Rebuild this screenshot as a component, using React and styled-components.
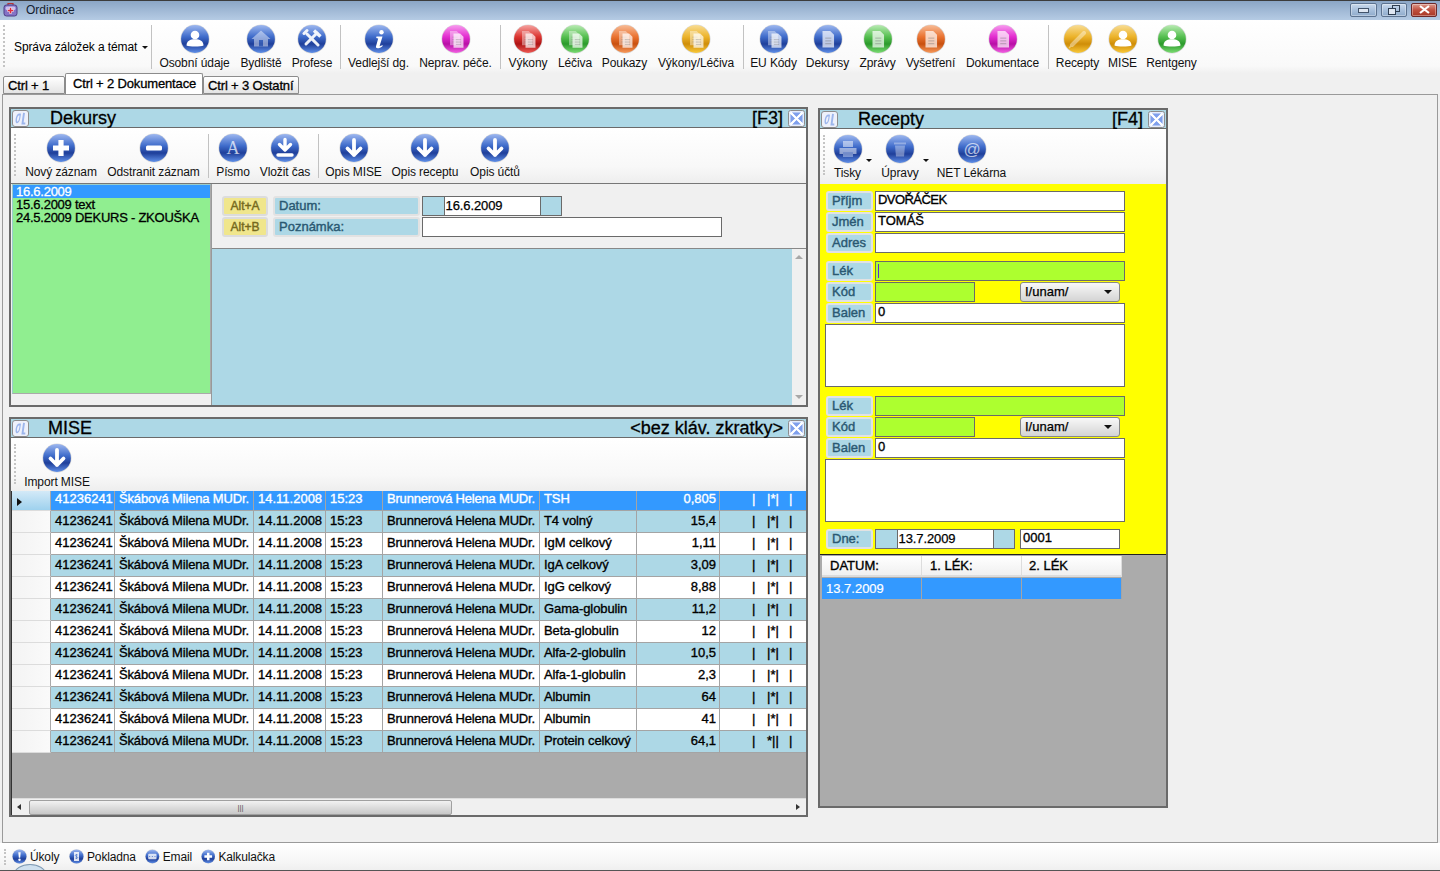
import React from "react";
import styled, { createGlobalStyle } from "styled-components";

const Global = createGlobalStyle`
  html, body { margin: 0; padding: 0; background: #f0f0f0; }
  * { box-sizing: border-box; }
  body { font-family: "Liberation Sans", Arial, sans-serif; font-size: 12px; color: #000; }
`;

const Root = styled.div`
  width: 1440px; height: 871px; overflow: hidden; display: flex; flex-direction: column;
  background: #f0f0f0; position: relative;
`;
const TitleBar = styled.div`
  height: 20px; flex: none; display: flex; align-items: center; padding: 0 3px 2px 3px;
  background: linear-gradient(#8ba6c6, #a3bbd7 55%, #b5cbe4);
  border-top: 1px solid #3c3c3c;
`;
const TitleText = styled.span` margin-left: 8px; font-size: 12px; color: #14202e; flex: 1; `;
const WinBtn = styled.div`
  width: ${p => p.$w}px; height: 14px; margin-left: 4px; border-radius: 2px;
  border: 1px solid ${p => p.$close ? "#6d2a2a" : "#5c7390"};
  background: ${p => p.$close ? "linear-gradient(#dc9a8c, #c0503f 50%, #a83826)" : "linear-gradient(#c9d9ec, #a8c0dc 50%, #8fabcb)"};
  display: flex; align-items: center; justify-content: center; box-shadow: inset 0 0 0 1px rgba(255,255,255,.35);
`;
const TopArea = styled.div`
  height: 74px; flex: none; display: flex; flex-direction: column; position: relative;
  background: linear-gradient(#fff, #f9f9f9 62%, #f0f0f0 72%);
`;
const BigBar = styled.div` height: 53px; flex: none; display: flex; align-items: flex-start; padding-top: 4px; `;
const Grip = styled.div`
  width: 0; flex: none; height: ${p => p.$h || 42}px; border-left: 2px dotted #c4c4c4; margin: ${p => p.$m || "0"};
`;
const Sep = styled.div` flex: none; width: 1px; height: 44px; background: #c2c2c2; margin: 1px 2.5px 0 2.5px; `;
const Menu = styled.div`
  width: 148px; flex: none; height: 44px; display: flex; align-items: center; padding: 2px 0 0 14px; gap: 5px; white-space: nowrap; letter-spacing: -.1px;
  position: relative;
`;
const TopGrip = styled(Grip)` position: absolute; left: 3px; top: 1px; `;
const Caret = styled.span`
  display: inline-block; width: 0; height: 0; border-left: 3px solid transparent; border-right: 3px solid transparent;
  border-top: 3px solid #111;
`;
const Tool = styled.div`
  width: ${p => p.$w}px; flex: none; display: flex; flex-direction: column; align-items: center; position: relative;
  margin-right: ${p => p.$mr || 0}px; white-space: nowrap; font-size: 12px; color: #111; gap: 2px; letter-spacing: -.1px;
  svg { display: block; }
`;
const DropMark = styled.span`
  position: absolute; right: -5px; top: 25px; width: 0; height: 0;
  border-left: 3px solid transparent; border-right: 3px solid transparent; border-top: 3px solid #111;
`;
const TabRow = styled.div`
  height: 21px; flex: none; display: flex; align-items: flex-end; padding-left: 3px; position: relative; z-index: 2; margin-bottom: -1px;
`;
const Tab = styled.div`
  height: ${p => p.$active ? 21 : 18}px; width: ${p => p.$w}px; font-size: 13px; -webkit-text-stroke: .3px #000; letter-spacing: -.15px;
  padding: ${p => p.$active ? "2px 0 0 7px" : "1px 0 0 4px"}; white-space: nowrap;
  border: 1px solid #8c8c8c; border-bottom: ${p => p.$active ? "none" : "1px solid #8c8c8c"};
  background: ${p => p.$active ? "#fff" : "linear-gradient(#fff, #e4e4e4)"};
  border-radius: 2px 2px 0 0;
`;
const Content = styled.div`
  flex: 1; min-height: 0; margin: 0 2px; border: 1px solid #9a9a9a; background: #f0f0f0;
  display: flex; gap: 10px; padding: 12px 0 0 6px;
`;
const Column = styled.div` width: 799px; flex: none; display: flex; flex-direction: column; gap: 10px; `;
const Panel = styled.section`
  width: ${p => p.$w}px; height: ${p => p.$h}px; flex: none; display: flex; flex-direction: column;
  border: 2px solid #6a6a6a; margin-top: ${p => p.$top || 0}px; background: #f0f0f0;
`;
const PanelHead = styled.header`
  height: 19px; flex: none; background: #add8e6; display: flex; align-items: center; padding: 0 1px 0 1px;
  font-size: 18px; -webkit-text-stroke: .3px #000; border-bottom: 1px solid #6a6a6a; white-space: nowrap;
`;
const HeadTitle = styled.span` margin-left: ${p => p.$ml}px; flex: 1; `;
const HeadKey = styled.span` margin-right: 5px; `;
const PanelBar = styled.div`
  height: ${p => p.$h}px; flex: none; display: flex; align-items: flex-start; padding-top: 5px; padding-left: ${p => p.$pl}px; position: relative;
  background: linear-gradient(#fff, #f8f8f8 70%, #eeeeee);
`;
const GripAbs = styled(Grip)` position: absolute; left: 3px; top: 6px; `;
const DekBody = styled.div` flex: 1; min-height: 0; display: flex; align-items: flex-start; border-top: 1px solid #777; `;
const DekList = styled.div`
  width: 199px; height: 210px; flex: none; margin: 0 0 0 1px; background: #90ee90; border: 1px solid #9cc; border-color: #9cc #aaa #aaa #9cc;
  font-size: 13px; line-height: 13px; letter-spacing: -.25px; -webkit-text-stroke: .3px #000;
`;
const ListItem = styled.div`
  height: 13px; padding-left: 3px; white-space: nowrap;
  background: ${p => p.$sel ? "#3399ff" : "transparent"}; color: ${p => p.$sel ? "#fff" : "#000"};
  -webkit-text-stroke-color: ${p => p.$sel ? "#fff" : "#000"};
`;
const DekRight = styled.div` flex: 1; align-self: stretch; display: flex; flex-direction: column; min-width: 0; border-left: 1px solid #999; `;
const DekForm = styled.div`
  height: 65px; flex: none; background: #f0f0f0; border-bottom: 1px solid #888; padding: 12px 0 0 10px;
  display: flex; flex-direction: column; gap: 1px;
`;
const DekRow = styled.div` display: flex; height: 20px; `;
const AltKey = styled.div`
  width: 46px; flex: none; border: 2px solid #dcdcdc; border-radius: 3px; background: #f0e68c; color: #75691c;
  font-size: 12px; line-height: 16px; text-align: center; -webkit-text-stroke: .4px #75691c; margin-right: 5px;
`;
const FieldLabel = styled.div`
  width: ${p => p.$w}px; flex: none; border: 2px solid #e2e2e2; border-radius: 3px; background: #add8e6; color: #2a5872;
  font-size: 13px; line-height: 16px; padding-left: ${p => p.$pl || 4}px; -webkit-text-stroke: .4px #2a5872; white-space: nowrap; margin-left: ${p => p.$ml || 0}px;
`;
const Input = styled.div`
  width: ${p => p.$w}px; height: ${p => p.$h || 20}px; flex: none; background: ${p => p.$bg || "#fff"}; border: 1px solid #6a6a6a;
  font-size: 13px; line-height: 16px; padding-left: 2px; -webkit-text-stroke: .35px #000; margin-left: ${p => p.$ml || 0}px; white-space: nowrap;
  letter-spacing: ${p => p.$ls || 0}px;
`;
const DateField = styled.div`
  width: 140px; height: 20px; flex: none; margin-left: ${p => p.$ml || 0}px; border: 1px solid #6a6a6a; background: #add8e6; display: flex; justify-content: center;
`;
const DateInner = styled.div`
  width: 97px; background: #fff; border-left: 1px solid #6a6a6a; border-right: 1px solid #6a6a6a; font-size: 13px; line-height: 17px; padding-left: 1px;
  -webkit-text-stroke: .25px #000; letter-spacing: -.1px;
`;
const DekBlue = styled.div` flex: 1; background: #add8e6; display: flex; justify-content: flex-end; `;
const VScroll = styled.div`
  width: 14px; background: #f0f0f0; display: flex; flex-direction: column; justify-content: space-between; align-items: center; padding: 6px 0;
`;
const ArrowUp = styled.span` width:0;height:0;border-left:4px solid transparent;border-right:4px solid transparent;border-bottom:4px solid #a8a8a8; `;
const ArrowDown = styled.span` width:0;height:0;border-left:4px solid transparent;border-right:4px solid transparent;border-top:4px solid #a8a8a8; `;
const GridWrap = styled.div`
  flex: 1; min-height: 0; background: #ababab; overflow: hidden; border-left: 1px solid #333; display: flex; flex-direction: column;
`;
const GridRows = styled.div` margin-top: -2px; height: 0; flex: 1; `;
const Row = styled.div`
  display: grid; grid-template-columns: 39px 64px 139px 72px 57px 157px 97px 83px 1fr; height: 22px;
  font-size: 13px; line-height: 20px; -webkit-text-stroke: .35px ${p => p.$sel ? "#fff" : "#000"};
  color: ${p => p.$sel ? "#fff" : "#000"};
  background: ${p => p.$sel ? "#3399ff" : p.$alt ? "#add8e6" : "#fff"};
`;
const RowHead = styled.div`
  background: ${p => p.$sel ? "linear-gradient(#d9ecf8, #9ed1ee)" : "linear-gradient(90deg,#f3f3f3,#fafafa)"};
  border-right: 1px solid #aaa; border-bottom: 1px solid #dcdcdc; display: flex; align-items: center; padding-left: 5px;
`;
const RowMark = styled.span` width:0;height:0;border-top:4px solid transparent;border-bottom:4px solid transparent;border-left:5px solid #111; margin-top: 5px; `;
const Cell = styled.div`
  border-right: 1px solid #a4a4a4; border-bottom: 1px solid #a4a4a4; padding: 0 ${p => p.$right ? 3 : 0}px 0 4px; overflow: hidden; white-space: nowrap;
  text-align: ${p => p.$right ? "right" : "left"}; letter-spacing: ${p => p.$ls || 0}px;
`;
const Flags = styled.div`
  display: grid; grid-template-columns: 15px 22px 18px; border-bottom: 1px solid #a4a4a4; padding-left: 32px; white-space: nowrap;
`;
const HScroll = styled.div`
  height: 17px; flex: none; background: #f0f0f0; display: flex; align-items: center; position: relative; padding-left: 5px;
  border-top: 1px solid #ddd;
`;
const ArrowLeft = styled.span` width:0;height:0;border-top:3px solid transparent;border-bottom:3px solid transparent;border-right:4px solid #333; `;
const ArrowRight = styled.span` width:0;height:0;border-top:3px solid transparent;border-bottom:3px solid transparent;border-left:4px solid #333; position:absolute; right:6px; `;
const Thumb = styled.div`
  width: 423px; height: 15px; margin-left: 8px; border: 1px solid #a0a0a0; border-radius: 2px;
  background: linear-gradient(#f2f2f2, #dcdcdc 50%, #c8c8c8); text-align: center; font-size: 8px; line-height: 13px; color: #555;
`;
const Yellow = styled.div`
  height: 371px; flex: none; background: #ffff00; padding: 7px 0 0 5px; display: flex; flex-direction: column; gap: 1px; border-top: 1px solid #eee;
`;
const FormRow = styled.div` height: 20px; flex: none; display: flex; margin-top: ${p => p.$mt || 0}px; `;
const Memo = styled.div` width: 300px; height: 63px; flex: none; background: #fff; border: 1px solid #6a6a6a; `;
const Combo = styled.div`
  width: 100px; height: 20px; flex: none; margin-left: 45px; border: 1px solid #888; border-radius: 3px;
  background: linear-gradient(#f8f8f8, #d4d4d4); font-size: 13px; line-height: 18px; padding-left: 4px; -webkit-text-stroke: .25px #000;
  display: flex; align-items: center; justify-content: space-between; padding-right: 7px;
`;
const ComboCaret = styled.span` width:0;height:0;border-left:4px solid transparent;border-right:4px solid transparent;border-top:4px solid #111; `;
const Caretline = styled.span` display: inline-block; width: 1px; height: 14px; background: #5a2bd0; margin-top: 2px; `;
const RxGrid = styled.div`
  flex: 1; min-height: 0; background: #ababab; border-top: 1px solid #222; padding: 1px 0 0 2px;
`;
const RxRow = styled.div`
  width: 300px; display: grid; grid-template-columns: 100px 100px 100px; height: ${p => p.$h}px;
  margin-top: ${p => p.$mt || 0}px;
`;
const RxHead = styled.div`
  background: linear-gradient(#fff, #f0f0f0); border-right: 1px solid #ddd; border-bottom: 2px solid #dcdcdc; font-size: 13px; line-height: 19px;
  padding-left: ${p => p.$pl}px; -webkit-text-stroke: .35px #000;
`;
const RxCell = styled.div`
  background: #3399ff; color: #fff; border-right: 1px solid #a4a4a4; font-size: 13px; line-height: 21px; padding-left: 4px; -webkit-text-stroke: .2px #fff;
`;
const Status = styled.div`
  height: 28px; flex: none; display: flex; align-items: flex-start; padding: 6px 0 0 4px; position: relative; overflow: hidden;
  background: linear-gradient(#fff, #f6f6f6 70%, #efefef); border-bottom: 1px solid #555;
`;
const StatusItem = styled.div`
  display: flex; align-items: center; gap: 3px; margin-left: ${p => p.$ml}px; width: ${p => p.$w}px; font-size: 12px; white-space: nowrap; color: #111; height: 15px; letter-spacing: -.15px;
`;
const StartBump = styled.div`
  position: absolute; left: 14px; bottom: -14px; width: 32px; height: 20px; border-radius: 50%; background: #cfe0ef; border: 1px solid #7d99b3;
`;

const palette = {
  blue: ["#9db7ef", "#3f6ccb", "#1f3f9a", "#5f8fe8"],
  magenta: ["#f79bee", "#e32dd0", "#b80fa6", "#f25fe2"],
  red: ["#f5a3a0", "#dc3531", "#ae1414", "#ee5a55"],
  green: ["#b8ebb2", "#55bf50", "#2b9a2b", "#7bdc73"],
  orange: ["#f7bb96", "#ea7331", "#c9500f", "#f79a5c"],
  gold: ["#f8dc93", "#ecb32a", "#cf8d08", "#f9c93a"],
};

const Doc = ({ x = 0, y = 0, s = 1, o = .75 }) => (
  <g transform={`translate(${x} ${y}) scale(${s})`}>
    <path d="M0 0h7l3.5 3.5V15H0z" fill="#fff" opacity={o} />
    <path d="M2.5 6.5h5.5M2.5 9h5.5M2.5 11.5h5.5" stroke="#6d6d6d" strokeOpacity=".35" strokeWidth="1" />
  </g>
);

const glyphs = {
  person: <g fill="#fff"><circle cx="15" cy="11" r="4.3" /><path d="M6.5 21.5c0-4.5 3.6-6.3 8.5-6.3s8.5 1.8 8.5 6.3c-2.5 1.4-14.5 1.4-17 0z" /></g>,
  house: <g fill="#fff" opacity=".45"><path d="M15 6.5 24.5 15H22v7.5H8V15H5.5z" /><path d="M13 16h4v6.5h-4z" fill="#4a74c8" /></g>,
  tools: <g stroke="#fff" strokeWidth="3" strokeLinecap="round" opacity=".92"><path d="M10 10l11 11" /><path d="M20 9 9 20" /><path d="M17 6.5l6.5 6" strokeWidth="3.4" strokeLinecap="butt" /><path d="M7 9.5l3-3" strokeWidth="3" /></g>,
  info: <g fill="#fff"><circle cx="17.5" cy="8.3" r="2.2" /><path d="M12.5 12.5h6l-2.8 9.2c-.2.8.6.9 2.6-.6l.4.8c-2.6 2.4-7.4 3.6-6.7.4l2.2-7.8-2 -.6z" /></g>,
  stack: <g><Doc x={9} y={7} s={.95} o={.4} /><Doc x={12.5} y={9.5} s={.95} o={.7} /></g>,
  doc: <Doc x={9.5} y={7} s={1.1} o={.7} />,
  plus: <path d="M12.4 7h5.2v5.4H23v5.2h-5.4V23h-5.2v-5.4H7v-5.2h5.4z" fill="#fff" />,
  minus: <rect x="7" y="12.5" width="16" height="5" rx="1.5" fill="#fff" />,
  font: <text x="15" y="21" textAnchor="middle" fontFamily="Liberation Serif" fontSize="18" fill="#fff" opacity=".7">A</text>,
  down: <path d="M15 7v15M8.5 15.5 15 22l6.5-6.5" fill="none" stroke="#fff" strokeWidth="3.8" strokeLinecap="round" strokeLinejoin="round" />,
  time: <g fill="none" stroke="#fff" strokeWidth="3.4" strokeLinecap="round" strokeLinejoin="round"><path d="M15 6.5v10M9.500 11.500 15 17l5.500-5.500" /><path d="M8 22h14" /></g>,
  thermo: <g stroke="#fff" strokeLinecap="round" opacity=".4"><path d="M9 21 21 9" strokeWidth="4" /><path d="M8 22l-1.5 1.5" strokeWidth="1.5" /></g>,
  printer: <g fill="#fff" opacity=".5"><path d="M10 7h10v6H10z" /><path d="M6.500 14h17v6h-17z" /><path d="M10 18h10v5H10z" fill="#c4d4f4" /></g>,
  trash: <g fill="#fff" opacity=".35"><path d="M9 8.500h12v2H9z" /><path d="M10 11.500h10l-1 11h-8z" /></g>,
  at: <text x="15" y="21" textAnchor="middle" fontFamily="Liberation Sans" fontSize="17" fill="#fff" opacity=".65">@</text>,
  bang: <g fill="#fff"><path d="M12.600 6.500h4.800l-1 11h-2.800z" /><circle cx="15" cy="21.500" r="2.400" /></g>,
  money: <g fill="#fff" opacity=".85"><path d="M10 6h10v18H10z" /><path d="M15 10v10M17.500 12c-2-1.500-5-1-5 1s5 2 5 4-3 2.500-5 1" stroke="#4a74c8" strokeWidth="1.300" fill="none" /></g>,
  mail: <g><rect x="6.500" y="9.500" width="17" height="11" rx="2" fill="#fff" opacity=".8" /><path d="M9.500 15h.1M14.900 15h.1M20.300 15h.1" stroke="#4a74c8" strokeWidth="2.200" strokeLinecap="round" /></g>,
};

const Orb = ({ color = "blue", glyph, size = 30 }) => {
  const [light, mid, dark, glow] = palette[color];
  const id = `orb-${color}`;
  return (
    <svg width={size} height={size} viewBox="0 0 30 30">
      <defs>
        <linearGradient id={id} x1="0" y1="0" x2="0" y2="1">
          <stop offset="0" stopColor={light} />
          <stop offset=".42" stopColor={mid} />
          <stop offset=".68" stopColor={dark} />
          <stop offset="1" stopColor={glow} />
        </linearGradient>
      </defs>
      <circle cx="15" cy="15" r="14.600" fill="#000" opacity=".14" />
      <circle cx="15" cy="15" r="13.900" fill={`url(#${id})`} />
      {glyphs[glyph]}
    </svg>
  );
};

const ToolBtn = ({ w, color, glyph, label, drop, mr }) => (
  <Tool $w={w} $mr={mr}>
    <Orb color={color} glyph={glyph} />
    <span>{label}</span>
    {drop && <DropMark />}
  </Tool>
);

const PanelIcon = () => (
  <svg width="17" height="17" viewBox="0 0 17 17">
    <rect x=".5" y=".5" width="16" height="16" rx="2.500" fill="#eef1fb" stroke="#8d8d8d" />
    <path d="M7 3.500C3.800 3.800 2.500 12 4.500 13.200c1.900.6 3-1.800 3.700-4.400L9 3.800C8.500 3.500 7.800 3.400 7 3.500z" fill="#9db6ec" />
    <path d="M6.800 5.500C5.200 6 4.600 10.500 5.300 11.400c.9.300 1.500-1.400 1.800-3l.5-2.800c-.3-.1-.5-.1-.8-.1z" fill="#eef1fb" />
    <path d="M12 2.800 10.500 13.500h2.800" fill="none" stroke="#9db6ec" strokeWidth="1.900" />
  </svg>
);
const CloseIcon = () => (
  <svg width="17" height="17" viewBox="0 0 17 17">
    <rect x=".5" y=".5" width="16" height="16" rx="2" fill="#e6ecfb" stroke="#8d8d8d" />
    <path d="M2.500 4 7.500 8.500 2.500 13zM14.500 4 9.500 8.500 14.500 13zM4 2.500 8.500 7.500 13 2.500zM4 14.500 8.500 9.500 13 14.500z" fill="#7f9fec" />
    <path d="M2.500 2.500l12 12M14.500 2.500l-12 12" stroke="#fff" strokeWidth="2" />
  </svg>
);
const AppIcon = () => (
  <svg width="15" height="15" viewBox="0 0 15 15">
    <path d="M5 3V1.500h5V3" fill="none" stroke="#b33" strokeWidth="1.200" />
    <rect x="1" y="3" width="13" height="11" rx="2.500" fill="#8473c6" stroke="#4e3f86" />
    <rect x="2.500" y="4.500" width="10" height="3.500" rx="1.500" fill="#c9c0ee" />
    <path d="M6.500 5.500h2v2h2v2h-2v2h-2v-2h-2v-2h2z" fill="#e02b3c" stroke="#fff" strokeWidth=".5" />
  </svg>
);

const rows = [
  ["TSH", "0,805"], ["T4 volný", "15,4"], ["IgM celkový", "1,11"], ["IgA celkový", "3,09"], ["IgG celkový", "8,88"],
  ["Gama-globulin", "11,2"], ["Beta-globulin", "12"], ["Alfa-2-globulin", "10,5"], ["Alfa-1-globulin", "2,3"],
  ["Albumin", "64"], ["Albumin", "41"], ["Protein celkový", "64,1"],
];

const mainTools = [
  [[81, "blue", "person", "Osobní údaje"], [52, "blue", "house", "Bydliště"], [50, "blue", "tools", "Profese"]],
  [[71, "blue", "info", "Vedlejší dg."], [83, "magenta", "stack", "Neprav. péče."]],
  [[50, "red", "stack", "Výkony"], [44, "green", "stack", "Léčiva"], [55, "orange", "stack", "Poukazy"], [88, "gold", "stack", "Výkony/Léčiva"]],
  [[55, "blue", "stack", "EU Kódy"], [53, "blue", "doc", "Dekursy"], [47, "green", "doc", "Zprávy"], [59, "orange", "doc", "Vyšetření"], [85, "magenta", "doc", "Dokumentace"]],
  [[53, "gold", "thermo", "Recepty"], [37, "gold", "person", "MISE"], [61, "green", "person", "Rentgeny"]],
];
const dekTools = [
  [[82, "blue", "plus", "Nový záznam"], [103, "blue", "minus", "Odstranit záznam"]],
  [[44, "blue", "font", "Písmo"], [60, "blue", "time", "Vložit čas"]],
  [[65, "blue", "down", "Opis MISE"], [78, "blue", "down", "Opis receptu"], [62, "blue", "down", "Opis účtů"]],
];

const Lek = ({ first }) => (
  <>
    <FormRow $mt={first ? 7 : 8}>
      <FieldLabel $w={47} $ml={1}>Lék</FieldLabel>
      <Input $w={250} $ml={2} $bg="#adff2f">{first && <Caretline />}</Input>
    </FormRow>
    <FormRow>
      <FieldLabel $w={47} $ml={1}>Kód</FieldLabel>
      <Input $w={100} $ml={2} $bg="#adff2f" />
      <Combo>I/unam/<ComboCaret /></Combo>
    </FormRow>
    <FormRow>
      <FieldLabel $w={47} $ml={1}>Balen</FieldLabel>
      <Input $w={250} $ml={2}>0</Input>
    </FormRow>
    <Memo />
  </>
);

export default function App() {
  return (
    <Root>
      <Global />
      <TitleBar>
        <AppIcon />
        <TitleText>Ordinace</TitleText>
        <WinBtn $w={27}>
          <svg width="11" height="6" viewBox="0 0 11 6"><rect x=".5" y="1.500" width="10" height="4" fill="#dfe7f2" stroke="#42546b" /></svg>
        </WinBtn>
        <WinBtn $w={26}>
          <svg width="12" height="10" viewBox="0 0 12 10"><rect x="4.500" y=".5" width="7" height="6" fill="none" stroke="#2f3f52" /><rect x=".5" y="3.500" width="7" height="6" fill="#dfe7f2" stroke="#2f3f52" /></svg>
        </WinBtn>
        <WinBtn $w={26} $close>
          <svg width="13" height="9" viewBox="0 0 13 9"><path d="M2 1l9 7M11 1 2 8" stroke="#fff" strokeWidth="2.200" /></svg>
        </WinBtn>
      </TitleBar>
      <TopArea>
        <BigBar>
          <Menu><TopGrip $h={42} />Správa záložek a témat <Caret /></Menu>
          {mainTools.map((group, i) => (
            <React.Fragment key={i}>
              <Sep />
              {group.map(([w, c, g, l]) => <ToolBtn key={l} w={w} color={c} glyph={g} label={l} />)}
            </React.Fragment>
          ))}
        </BigBar>
        <TabRow>
          <Tab $w={62}>Ctrl + 1</Tab>
          <Tab $w={138} $active>Ctrl + 2 Dokumentace</Tab>
          <Tab $w={96}>Ctrl + 3 Ostatní</Tab>
        </TabRow>
      </TopArea>
      <Content>
        <Column>
          <Panel $h={300}>
            <PanelHead><PanelIcon /><HeadTitle $ml={21}>Dekursy</HeadTitle><HeadKey>[F3]</HeadKey><CloseIcon /></PanelHead>
            <PanelBar $h={55} $pl={9}>
              <GripAbs $h={42} />
              {dekTools.map((group, i) => (
                <React.Fragment key={i}>
                  {i > 0 && <Sep />}
                  {group.map(([w, c, g, l]) => <ToolBtn key={l} w={w} color={c} glyph={g} label={l} />)}
                </React.Fragment>
              ))}
            </PanelBar>
            <DekBody>
              <DekList>
                <ListItem $sel>16.6.2009</ListItem>
                <ListItem>15.6.2009 text</ListItem>
                <ListItem>24.5.2009 DEKURS - ZKOUŠKA</ListItem>
              </DekList>
              <DekRight>
                <DekForm>
                  <DekRow>
                    <AltKey>Alt+A</AltKey>
                    <FieldLabel $w={147}>Datum:</FieldLabel>
                    <DateField $ml={2}><DateInner>16.6.2009</DateInner></DateField>
                  </DekRow>
                  <DekRow>
                    <AltKey>Alt+B</AltKey>
                    <FieldLabel $w={147}>Poznámka:</FieldLabel>
                    <Input $w={300} $ml={2} />
                  </DekRow>
                </DekForm>
                <DekBlue><VScroll><ArrowUp /><ArrowDown /></VScroll></DekBlue>
              </DekRight>
            </DekBody>
          </Panel>
          <Panel $h={400}>
            <PanelHead><PanelIcon /><HeadTitle $ml={19}>MISE</HeadTitle><HeadKey>&lt;bez kláv. zkratky&gt;</HeadKey><CloseIcon /></PanelHead>
            <PanelBar $h={53} $pl={8}>
              <GripAbs $h={40} />
              <ToolBtn w={76} color="blue" glyph="down" label="Import MISE" />
            </PanelBar>
            <GridWrap>
              <GridRows>
                {rows.map(([test, val], i) => (
                  <Row key={i} $sel={i === 0} $alt={i % 2 === 1 && i !== 10}>
                    <RowHead $sel={i === 0}>{i === 0 && <RowMark />}</RowHead>
                    <Cell>41236241</Cell>
                    <Cell $ls={-.15}>Škábová Milena MUDr.</Cell>
                    <Cell>14.11.2008</Cell>
                    <Cell>15:23</Cell>
                    <Cell $ls={-.2}>Brunnerová Helena MUDr.</Cell>
                    <Cell $ls={-.1}>{test}</Cell>
                    <Cell $right>{val}</Cell>
                    <Flags><span>|</span><span>{i === 11 ? "*||" : "|*|"}</span><span>|</span></Flags>
                  </Row>
                ))}
              </GridRows>
              <HScroll><ArrowLeft /><Thumb>|||</Thumb><ArrowRight /></HScroll>
            </GridWrap>
          </Panel>
        </Column>
        <Panel $w={350} $h={700} $top={1}>
          <PanelHead><PanelIcon /><HeadTitle $ml={20}>Recepty</HeadTitle><HeadKey>[F4]</HeadKey><CloseIcon /></PanelHead>
          <PanelBar $h={54} $pl={8}>
            <GripAbs $h={40} />
            <ToolBtn w={39} mr={9} color="blue" glyph="printer" label="Tisky" drop />
            <ToolBtn w={48} mr={9} color="blue" glyph="trash" label="Úpravy" drop />
            <ToolBtn w={77} color="blue" glyph="at" label="NET Lékárna" />
          </PanelBar>
          <Yellow>
            <FormRow><FieldLabel $w={47} $ml={1}>Příjm</FieldLabel><Input $w={250} $ml={2} $ls={-.55}>DVOŘÁČEK</Input></FormRow>
            <FormRow><FieldLabel $w={47} $ml={1}>Jmén</FieldLabel><Input $w={250} $ml={2}>TOMÁŠ</Input></FormRow>
            <FormRow><FieldLabel $w={47} $ml={1}>Adres</FieldLabel><Input $w={250} $ml={2} /></FormRow>
            <Lek first />
            <Lek />
            <FormRow $mt={6}>
              <FieldLabel $w={47} $ml={1}>Dne:</FieldLabel>
              <DateField $ml={2}><DateInner>13.7.2009</DateInner></DateField>
              <Input $w={100} $ml={5}>0001</Input>
            </FormRow>
          </Yellow>
          <RxGrid>
            <RxRow $h={21}>
              <RxHead $pl={8}>DATUM:</RxHead><RxHead $pl={8}>1. LÉK:</RxHead><RxHead $pl={7}>2. LÉK</RxHead>
            </RxRow>
            <RxRow $h={21} $mt={1}>
              <RxCell>13.7.2009</RxCell><RxCell /><RxCell />
            </RxRow>
          </RxGrid>
        </Panel>
      </Content>
      <Status>
        <Grip $h={16} />
        <StatusItem $ml={6} $w={48}><Orb glyph="bang" size={15} />Úkoly</StatusItem>
        <StatusItem $ml={9} $w={67}><Orb glyph="money" size={15} />Pokladna</StatusItem>
        <StatusItem $ml={9} $w={47}><Orb glyph="mail" size={15} />Email</StatusItem>
        <StatusItem $ml={9} $w={74}><Orb glyph="plus" size={15} />Kalkulačka</StatusItem>
        <StartBump />
      </Status>
    </Root>
  );
}
